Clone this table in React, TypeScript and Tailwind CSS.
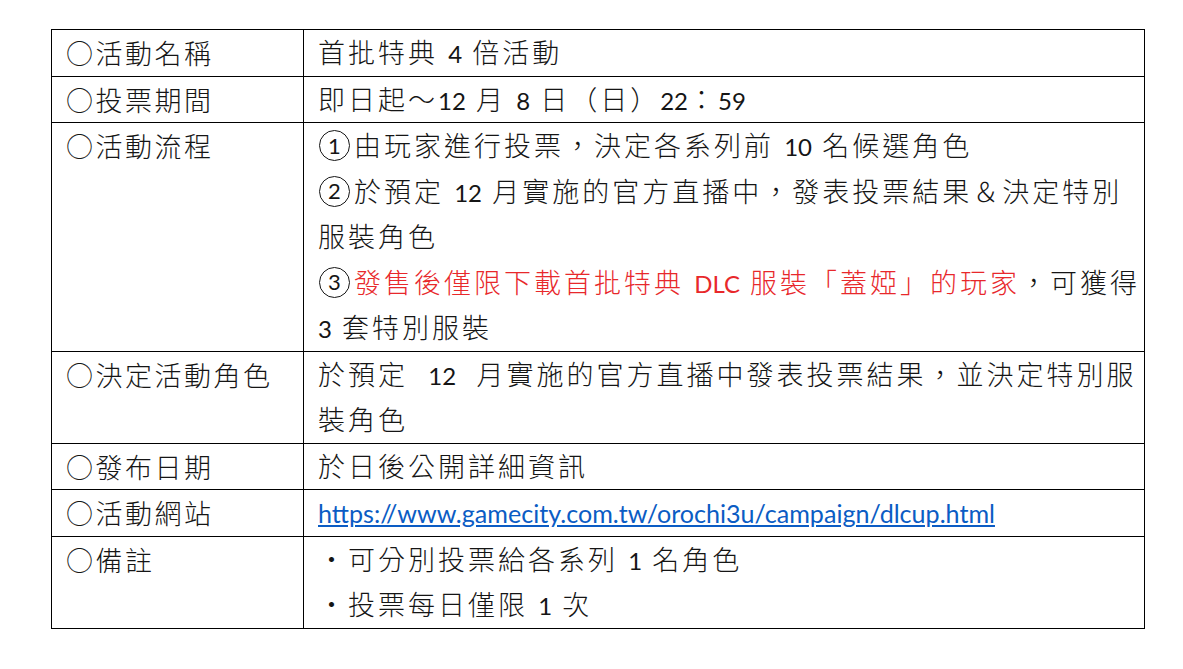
import React from 'react'

// split a string into CJK runs and Latin runs; Latin gets its own size, no tracking
const mix = (s: string) =>
  s.split(/([\x20-\x7e]+)/).map((part, i) =>
    i % 2 === 1 ? (
      <span key={i} className="text-[24px] leading-none tracking-normal font-normal [word-spacing:4px]">
        {part}
      </span>
    ) : (
      part
    ),
  )

const Circled = ({ n }: { n: number }) => (
  <span className="inline-flex items-center justify-center w-[31px] h-[31px] rounded-full border-[1.5px] border-[#151515] text-[22px] font-normal leading-none align-top mt-[7px] ml-[1px] mr-[4px] tracking-normal">
    {n}
  </span>
)

const rows: { label: string; lines: React.ReactNode[] }[] = [
  { label: '○活動名稱', lines: [mix('首批特典 4 倍活動')] },
  { label: '○投票期間', lines: [mix('即日起～12 月 8 日（日）22：59')] },
  {
    label: '○活動流程',
    lines: [
      <>
        <Circled n={1} />
        {mix('由玩家進行投票，決定各系列前 10 名候選角色')}
      </>,
      <>
        <Circled n={2} />
        {mix('於預定 12 月實施的官方直播中，發表投票結果＆決定特別')}
      </>,
      '服裝角色',
      <>
        <Circled n={3} />
        <span className="text-[#e8282b]">{mix('發售後僅限下載首批特典 DLC 服裝「蓋婭」的玩家')}</span>，可獲得
      </>,
      mix('3 套特別服裝'),
    ],
  },
  {
    label: '○決定活動角色',
    lines: [mix('於預定  12  月實施的官方直播中發表投票結果，並決定特別服'), '裝角色'],
  },
  { label: '○發布日期', lines: ['於日後公開詳細資訊'] },
  {
    label: '○活動網站',
    lines: [
      <a className="text-[#0b5cc4] underline text-[25.1px] leading-none font-normal tracking-normal" href="#">
        https://www.gamecity.com.tw/orochi3u/campaign/dlcup.html
      </a>,
    ],
  },
  {
    label: '○備註',
    lines: [mix('・可分別投票給各系列 1 名角色'), mix('・投票每日僅限 1 次')],
  },
]

export default function App() {
  return (
    <div className="w-[1183px] h-[669px] bg-white pt-[29px] pl-[51px] text-[#151515]">
      <table className="w-[1094px] border-collapse table-fixed text-[27px] font-light">
        <colgroup>
          <col className="w-[252px]" />
          <col />
        </colgroup>
        <tbody>
          {rows.map((r) => (
            <tr key={r.label}>
              <td
                className="border-[1.5px] border-black align-top pl-[14px] py-0 leading-[45.5px] tracking-[2.5px]"
                style={{ fontFamily: '"Noto Sans CJK TC", sans-serif' }}
              >
                {r.label}
              </td>
              <td
                className="border-[1.5px] border-black align-top pl-[14px] pr-0 py-0 leading-[45.5px] tracking-[3px]"
                style={{ fontFamily: 'Lato, "Noto Sans CJK TC", sans-serif' }}
              >
                {r.lines.map((l, i) => (
                  <div key={i} className="whitespace-pre h-[45.5px]">
                    {l}
                  </div>
                ))}
              </td>
            </tr>
          ))}
        </tbody>
      </table>
    </div>
  )
}
